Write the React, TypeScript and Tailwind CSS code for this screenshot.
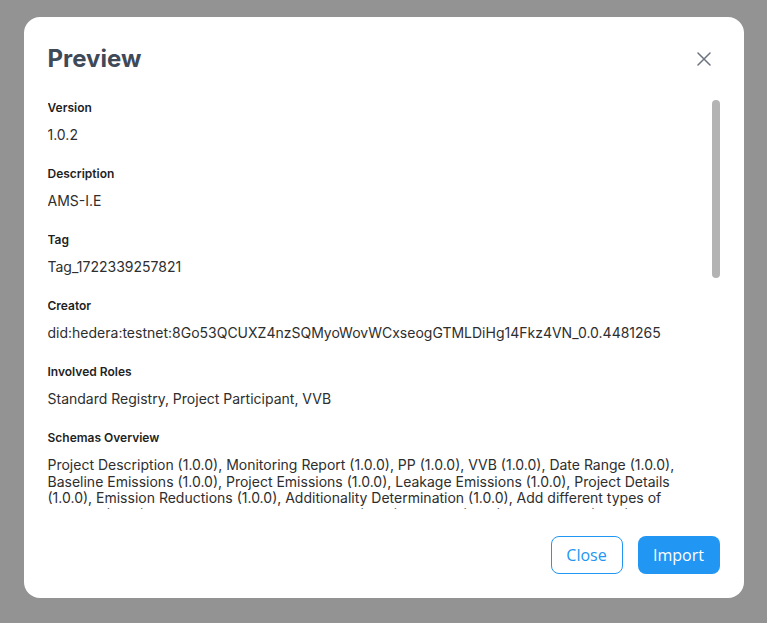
const fields: { label: string; value: string }[] = [
  { label: "Version", value: "1.0.2" },
  { label: "Description", value: "AMS-I.E" },
  { label: "Tag", value: "Tag_1722339257821" },
  {
    label: "Creator",
    value: "did:hedera:testnet:8Go53QCUXZ4nzSQMyoWovWCxseogGTMLDiHg14Fkz4VN_0.0.4481265",
  },
  { label: "Involved Roles", value: "Standard Registry, Project Participant, VVB" },
  {
    label: "Schemas Overview",
    value:
      "Project Description (1.0.0), Monitoring Report (1.0.0), PP (1.0.0), VVB (1.0.0), Date Range (1.0.0), Baseline Emissions (1.0.0), Project Emissions (1.0.0), Leakage Emissions (1.0.0), Project Details (1.0.0), Emission Reductions (1.0.0), Additionality Determination (1.0.0), Add different types of projects (1.0.0), Add different types of sources (1.0.0), Vintage (1.0.0), Verification (1.0.0), Monitoring Period (1.0.0)",
  },
  { label: "Tools", value: "Tool 03, Tool 05, Tool 07, Tool 21, Tool 33" },
];

export default function App() {
  return (
    <div className="min-h-[623px] bg-[#939393] pt-[17px] font-['Inter',sans-serif]">
      <div className="mx-auto flex h-[581px] w-[720px] flex-col rounded-2xl bg-white">
        <div className="flex items-center justify-between px-6 pt-[26px]">
          <h2 className="text-[24px] font-bold leading-8 text-[#3f4a59]">Preview</h2>
          <button className="mr-[4px] flex h-6 w-6 items-center justify-center text-[#6b7280]">
            <svg width="14" height="14" viewBox="0 0 14 14" fill="none" stroke="currentColor" strokeWidth="1.5" strokeLinecap="round">
              <path d="M1 1L13 13M13 1L1 13" />
            </svg>
          </button>
        </div>

        {/* scroll area, content clipped at the bottom */}
        <div className="relative mx-6 mt-[17px] h-[417px] overflow-hidden pt-2">
          <div className="flex flex-col gap-[22.5px] pr-2">
            {fields.map((f) => (
              <div key={f.label}>
                <div className="mb-[12px] text-xs font-semibold leading-[15px] text-[#1f1f1f]">{f.label}</div>
                <div className="text-sm leading-[16.5px] text-[#2e2e2e]">{f.value}</div>
              </div>
            ))}
          </div>
          <div className="absolute right-0 top-2 h-[178px] w-2 rounded-full bg-[#b3b3b3]" />
        </div>

        <div className="mt-[27px] flex justify-end gap-[15px] px-6 font-['Open_Sans',sans-serif]">
          <button className="h-[38px] w-[72px] rounded-lg border border-[#2196f3] text-base text-[#2196f3]">
            Close
          </button>
          <button className="h-[38px] w-[82px] rounded-lg bg-[#2196f3] text-base text-white">
            Import
          </button>
        </div>
      </div>
    </div>
  );
}
